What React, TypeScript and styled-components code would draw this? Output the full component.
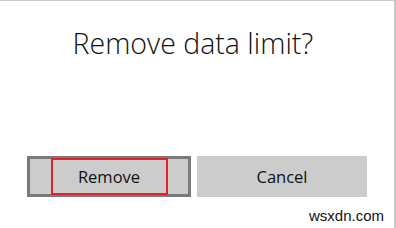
import styled, { createGlobalStyle } from "styled-components";

const GlobalStyle = createGlobalStyle`
    html, body {
        margin: 0;
        padding: 0;
        background: #ffffff;
    }
    body {
        font-family: "Open Sans", "Noto Sans", sans-serif;
    }
`;

const Dialog = styled.div`
    box-sizing: border-box;
    width: 396px;
    height: 228px;
    border-top: 1px solid #c9c9c9;
    border-right: 2px solid #c9c9c9;
    background: #ffffff;
    display: flex;
    flex-direction: column;
`;

const Title = styled.h1`
    margin: 0;
    padding: 23px 8px 0 0;
    font-size: 28.5px;
    line-height: 38px;
    font-weight: 300;
    color: #111111;
    text-align: center;
`;

const ButtonRow = styled.div`
    display: flex;
    gap: 6px;
    margin-top: auto;
    padding-left: 27px;
`;

const DialogButton = styled.button<{ $focused?: boolean; $width: number }>`
    position: relative;
    box-sizing: border-box;
    width: ${p => p.$width}px;
    height: 41px;
    margin: 0;
    padding: 0;
    background: #cccccc;
    border: ${p => (p.$focused ? "3px solid #7a7a7a" : "none")};
    font-family: "Open Sans", "Noto Sans", sans-serif;
    font-size: 16.5px;
    color: #111111;
    cursor: pointer;
`;

const Highlight = styled.span`
    position: absolute;
    left: 21px;
    top: -1px;
    width: 117px;
    height: 37px;
    box-sizing: border-box;
    border: 2px solid #e3202b;
    pointer-events: none;
`;

const Footer = styled.div`
    height: 31px;
    display: flex;
    justify-content: flex-end;
    align-items: flex-end;
    padding: 0 10px 4px 0;
    box-sizing: border-box;
`;

const Watermark = styled.span`
    font-family: "Liberation Sans", Arial, sans-serif;
    font-size: 15px;
    color: #111111;
`;

export default function App() {
    return <>
        <GlobalStyle />
        <Dialog>
            <Title>Remove data limit?</Title>

            <ButtonRow>
                <DialogButton $focused $width={164}>
                    Remove
                    <Highlight />
                </DialogButton>
                <DialogButton $width={170}>Cancel</DialogButton>
            </ButtonRow>

            <Footer>
                <Watermark>wsxdn.com</Watermark>
            </Footer>
        </Dialog>
    </>;
}
